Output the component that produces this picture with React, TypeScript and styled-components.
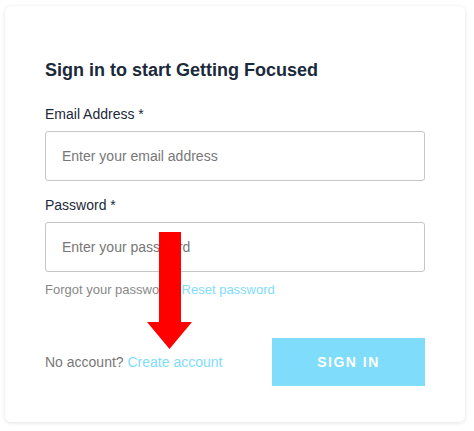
import React from 'react';
import styled, { createGlobalStyle } from 'styled-components';

const GlobalStyle = createGlobalStyle`
  body {
    margin: 0;
    background: #ffffff;
    font-family: "Liberation Sans", Arial, sans-serif;
  }
`;

const Page = styled.div`
  padding: 6px 9px 9px 5px;
`;

const Card = styled.div`
  position: relative;
  width: 460px;
  box-sizing: border-box;
  padding: 52px 40px 36px;
  background: #ffffff;
  border-radius: 6px;
  box-shadow: 0 1px 4px rgba(0, 0, 0, 0.12);
`;

const Title = styled.h1`
  margin: 0 0 24px;
  font-size: 18px;
  font-weight: 700;
  color: #1b2a3a;
  line-height: 24px;
`;

const Field = styled.div`
  display: flex;
  flex-direction: column;
  gap: 9px;
  margin-bottom: 16px;
`;

const Label = styled.label`
  font-size: 14px;
  line-height: 16px;
  color: #1b2a3a;
`;

const Input = styled.input`
  height: 50px;
  box-sizing: border-box;
  padding: 0 16px;
  border: 1px solid #c6c6c6;
  border-radius: 3px;
  font-family: inherit;
  font-size: 14px;
  color: #333;
  outline: none;

  &::placeholder {
    color: #777777;
  }
`;

const Helper = styled.p`
  margin: -6px 0 0;
  font-size: 13px;
  line-height: 16px;
  color: #888888;
`;

const Link = styled.a`
  color: #7fdcfb;
  text-decoration: none;
  cursor: pointer;
`;

const Footer = styled.div`
  display: flex;
  justify-content: space-between;
  align-items: center;
  margin-top: 40px;
`;

const FooterText = styled.span`
  font-size: 14px;
  color: #777777;
`;

const SignInButton = styled.button`
  width: 153px;
  height: 48px;
  border: none;
  background: #7fdcfb;
  color: #ffffff;
  font-family: inherit;
  font-size: 14px;
  font-weight: 700;
  letter-spacing: 1.5px;
  cursor: pointer;
`;

const Arrow = styled.svg`
  position: absolute;
  left: 137px;
  top: 226px;
  width: 50px;
  height: 124px;
`;

export default function App() {
  return (
    <>
      <GlobalStyle />
      <Page>
        <Card>
          <Title>Sign in to start Getting Focused</Title>

          <Field>
            <Label>Email Address *</Label>
            <Input type="email" placeholder="Enter your email address" />
          </Field>

          <Field>
            <Label>Password *</Label>
            <Input type="password" placeholder="Enter your password" />
          </Field>

          <Helper>
            Forgot your password? <Link>Reset password</Link>
          </Helper>

          <Footer>
            <FooterText>
              No account? <Link>Create account</Link>
            </FooterText>
            <SignInButton>SIGN IN</SignInButton>
          </Footer>

          {/* red annotation arrow over the form */}
          <Arrow viewBox="0 0 50 124">
            <polygon points="17,0 39,0 39,90 50,90 27.5,117 5,90 17,90" fill="#ff0000" />
          </Arrow>
        </Card>
      </Page>
    </>
  );
}
